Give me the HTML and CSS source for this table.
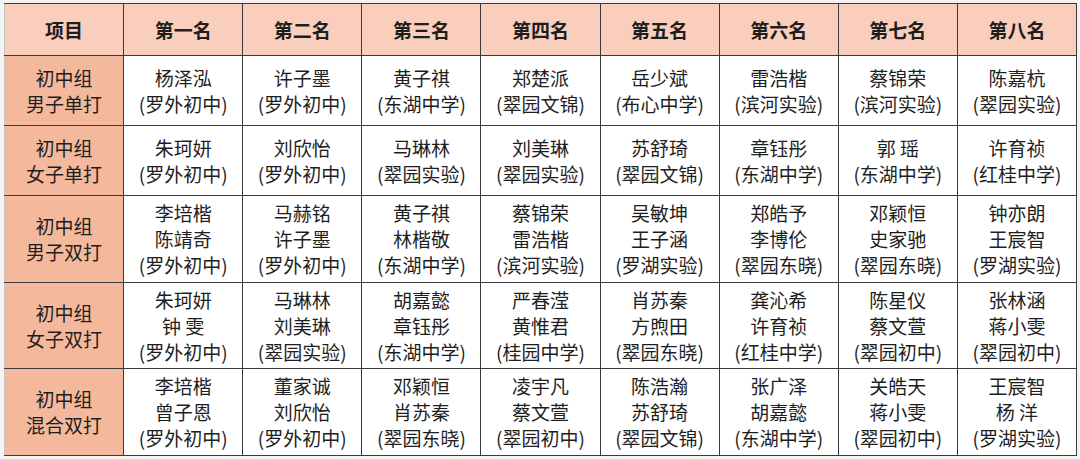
FILE: index.html
```html
<!DOCTYPE html>
<html lang="zh-CN">
<head>
<meta charset="utf-8">
<link rel="stylesheet" href="styles.css">
</head>
<body>
<div class="sheet">
<table class="results">
<colgroup>
<col class="c"><col class="c"><col class="c"><col class="c"><col class="c"><col class="c"><col class="c"><col class="c"><col class="c">
</colgroup>
<thead>
<tr class="hrow">
<th>项目</th><th>第一名</th><th>第二名</th><th>第三名</th><th>第四名</th><th>第五名</th><th>第六名</th><th class="dash">第七名</th><th>第八名</th>
</tr>
</thead>
<tbody>
<tr class="r2">
<td class="cat">初中组<br>男子单打</td>
<td>杨泽泓<br>(罗外初中)</td>
<td>许子墨<br>(罗外初中)</td>
<td>黄子祺<br>(东湖中学)</td>
<td>郑楚派<br>(翠园文锦)</td>
<td>岳少斌<br>(布心中学)</td>
<td>雷浩楷<br>(滨河实验)</td>
<td class="dash">蔡锦荣<br>(滨河实验)</td>
<td>陈嘉杭<br>(翠园实验)</td>
</tr>
<tr class="r2">
<td class="cat">初中组<br>女子单打</td>
<td>朱珂妍<br>(罗外初中)</td>
<td>刘欣怡<br>(罗外初中)</td>
<td>马琳林<br>(翠园实验)</td>
<td>刘美琳<br>(翠园实验)</td>
<td>苏舒琦<br>(翠园文锦)</td>
<td>章钰彤<br>(东湖中学)</td>
<td class="dash">郭 瑶<br>(东湖中学)</td>
<td>许育祯<br>(红桂中学)</td>
</tr>
<tr class="r3a">
<td class="cat">初中组<br>男子双打</td>
<td>李培楷<br>陈靖奇<br>(罗外初中)</td>
<td>马赫铭<br>许子墨<br>(罗外初中)</td>
<td>黄子祺<br>林楷敬<br>(东湖中学)</td>
<td>蔡锦荣<br>雷浩楷<br>(滨河实验)</td>
<td>吴敏坤<br>王子涵<br>(罗湖实验)</td>
<td>郑皓予<br>李博伦<br>(翠园东晓)</td>
<td class="dash">邓颖恒<br>史家驰<br>(翠园东晓)</td>
<td>钟亦朗<br>王宸智<br>(罗湖实验)</td>
</tr>
<tr class="r3b">
<td class="cat">初中组<br>女子双打</td>
<td>朱珂妍<br>钟 雯<br>(罗外初中)</td>
<td>马琳林<br>刘美琳<br>(翠园实验)</td>
<td>胡嘉懿<br>章钰彤<br>(东湖中学)</td>
<td>严春滢<br>黄惟君<br>(桂园中学)</td>
<td>肖苏秦<br>方煦田<br>(翠园东晓)</td>
<td>龚沁希<br>许育祯<br>(红桂中学)</td>
<td class="dash">陈星仪<br>蔡文萱<br>(翠园初中)</td>
<td>张林涵<br>蒋小雯<br>(翠园初中)</td>
</tr>
<tr class="r3a">
<td class="cat">初中组<br>混合双打</td>
<td>李培楷<br>曾子恩<br>(罗外初中)</td>
<td>董家诚<br>刘欣怡<br>(罗外初中)</td>
<td>邓颖恒<br>肖苏秦<br>(翠园东晓)</td>
<td>凌宇凡<br>蔡文萱<br>(翠园初中)</td>
<td>陈浩瀚<br>苏舒琦<br>(翠园文锦)</td>
<td>张广泽<br>胡嘉懿<br>(东湖中学)</td>
<td class="dash">关皓天<br>蒋小雯<br>(翠园初中)</td>
<td>王宸智<br>杨 洋<br>(罗湖实验)</td>
</tr>
</tbody>
</table>
</div>
</body>
</html>
```
FILE: styles.css
```css
html, body {
  margin: 0;
  padding: 0;
  background: #f4f4f4;
}
.sheet {
  padding: 3px 0 0 4px;
}
.results {
  border-collapse: collapse;
  table-layout: fixed;
  width: 1073px;
  font-family: "Noto Sans CJK SC", "Noto Sans", sans-serif;
  font-size: 19px;
  line-height: 26px;
  color: #1e1e1e;
  background: #ffffff;
}
.results col.c {
  width: 119px;
}
.results th,
.results td {
  border: 1px solid #3a3a3a;
  text-align: center;
  vertical-align: middle;
  padding: 0;
  white-space: nowrap;
}
.results th {
  background: #f9cebc;
  font-weight: bold;
}
.results td.cat {
  background: #f4b99c;
}
.results th.dash,
.results td.dash {
  border-right: 1px dashed #b0b0b0;
}
.results th:first-child,
.results td:first-child {
  border-left-color: #c8c8c8;
}
.hrow { height: 52px; }
.r2 { height: 70px; }
.r3a { height: 87px; }
.r3b { height: 86px; }
```
